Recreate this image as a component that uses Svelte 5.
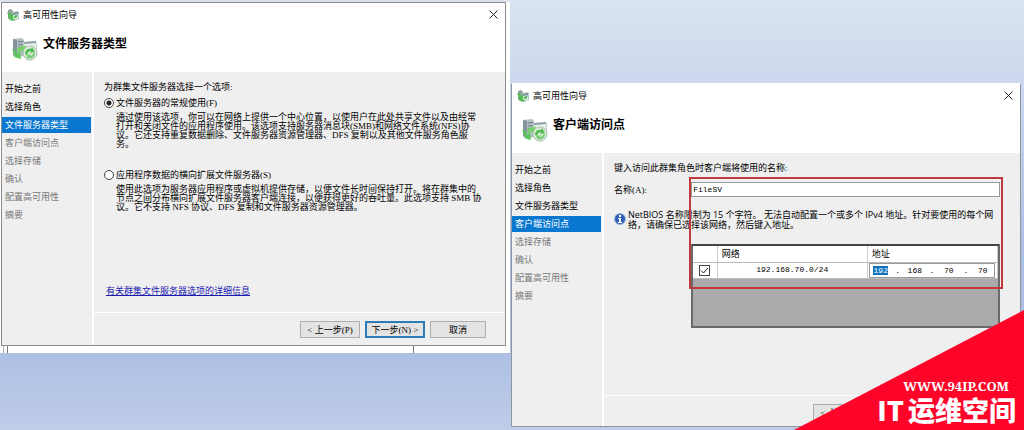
<script>
    const steps = [
        "开始之前",
        "选择角色",
        "文件服务器类型",
        "客户端访问点",
        "选择存储",
        "确认",
        "配置高可用性",
        "摘要"
    ];

    const fileServerTypes = [
        {
            id: "general",
            label: "文件服务器的常规使用(F)",
            lines: [
                "通过使用该选项，你可以在网络上提供一个中心位置，以使用户在此处共享文件以及由经常",
                "打开和关闭文件的应用程序使用。该选项支持服务器消息块(SMB)和网络文件系统(NFS)协",
                "议。它还支持重复数据删除、文件服务器资源管理器、DFS 复制以及其他文件服务角色服",
                "务。"
            ]
        },
        {
            id: "scaleout",
            label: "应用程序数据的横向扩展文件服务器(S)",
            lines: [
                "使用此选项为服务器应用程序或虚拟机提供存储，以便文件长时间保持打开。将在群集中的",
                "节点之间分布横向扩展文件服务器客户端连接，以便获得更好的吞吐量。此选项支持 SMB 协",
                "议。它不支持 NFS 协议、DFS 复制和文件服务器资源管理器。"
            ]
        }
    ];

    let serverType = $state("general");
    let clientName = $state("FileSV");
    let useNetwork = $state(true);
    let address = $state(["192", "168", "70", "70"]);
</script>

{#snippet smallIcon()}
    <svg class="icon-small" viewBox="0 0 12 12" aria-hidden="true">
        <path d="M1 1l3-1 2 2v8l-3 1-2-2z" fill="#8fa39a" />
        <path d="M5 3l6-1 1 1v7l-5 2-2-1z" fill="#b5c6c4" />
        <path d="M6 4l5-1v2l-5 1z" fill="#7d929c" />
        <path d="M0 3l3 1 1 2 2-2v4l3 2-4 2-4-3 1-1z" fill="#54bd55" />
        <circle cx="8.5" cy="8" r="2.5" fill="#d9edd8" />
        <path d="M7 9c0-2 1-3 3-3v2L8 9z" fill="#3fae47" />
    </svg>
{/snippet}

{#snippet largeIcon()}
    <svg class="icon-large" viewBox="0 0 26 24" aria-hidden="true">
        <path d="M1 2l9-1 2 2v16l-8 1-3-2z" fill="#b4bec2" />
        <path d="M1 2l4 1v17l-4-2z" fill="#84949a" />
        <path d="M6 5l5-.5M6 8l5-.5M6 11l5-.5" stroke="#6d7b82" />
        <path d="M11 5l13-1 1 2v13l-13 1z" fill="#c3cfd3" />
        <path d="M12 7l12-1v11l-12 1z" fill="#e4f1e6" />
        <path d="M12 5l12-1v2l-12 1z" fill="#93a3aa" />
        <path d="M0 12l3 1 2 4 3-3 1 8-7-2 1-1z" fill="#5cc85a" />
        <path d="M4 13l6-5 1 2 3-2-1 6-4 1 1-2-4 2z" fill="#74d069" />
        <circle cx="18" cy="16" r="7" fill="#dcebd9" stroke="#a9bfac" />
        <path d="M13 17c0-4 3-6 6-5l1-2 3 5-5 1 1-2c-2 0-3 1-4 4z" fill="#4dbb50" />
        <path d="M23 16c0 4-3 6-6 5l-1 1-2-4 5-1-1 2c2 0 3-1 3-3z" fill="#79cc75" />
    </svg>
{/snippet}

{#snippet chrome(heading)}
    <div class="titlebar">
        {@render smallIcon()}
        <span>高可用性向导</span>
        <button class="close" aria-label="关闭">
            <svg viewBox="0 0 9 9"><path d="M.5.5l8 8M8.5.5l-8 8" stroke="#222" fill="none" /></svg>
        </button>
    </div>
    <header>
        {@render largeIcon()}
        <h1>{heading}</h1>
    </header>
{/snippet}

{#snippet sidebar(current)}
    <nav>
        <ol>
            {#each steps as step, i}
                <li class:current={i === current} class:pending={i > current}>{step}</li>
            {/each}
        </ol>
    </nav>
{/snippet}

{#snippet buttons()}
    <footer>
        <button class="btn">&lt; 上一步(P)</button>
        <button class="btn primary">下一步(N) &gt;</button>
        <button class="btn cancel">取消</button>
    </footer>
{/snippet}

<main class="desktop">
    <div class="backdrop">
        <section class="window">
            {@render chrome("文件服务器类型")}
            <div class="body">
                {@render sidebar(2)}
                <div class="pane">
                    <div class="content">
                        <p>为群集文件服务器选择一个选项:</p>
                        {#each fileServerTypes as type}
                            <div class="option">
                                <input type="radio" id={type.id} name="type" value={type.id} bind:group={serverType} />
                                <label for={type.id}>{type.label}</label>
                                <p class="desc">
                                    {#each type.lines as line}
                                        {line}<br />
                                    {/each}
                                </p>
                            </div>
                        {/each}
                        <a href="#details">有关群集文件服务器选项的详细信息</a>
                    </div>
                    {@render buttons()}
                </div>
            </div>
        </section>
        <div class="behind"><i></i><i></i></div>
    </div>

    <section class="window second">
        {@render chrome("客户端访问点")}
        <div class="body">
            {@render sidebar(3)}
            <div class="pane">
                <div class="content">
                    <p>键入访问此群集角色时客户端将使用的名称:</p>
                    <div class="field">
                        <label for="client-name">名称(A):</label>
                        <input id="client-name" type="text" bind:value={clientName} />
                    </div>
                    <div class="info">
                        <svg viewBox="0 0 12 12" aria-hidden="true">
                            <circle cx="6" cy="6" r="5.5" fill="#2f62b5" stroke="#9cb4da" />
                            <path d="M5 2h2v2H5zM4 5h3v4h1v1H4V9h1V6H4z" fill="#fff" />
                        </svg>
                        <p>
                            NetBIOS 名称限制为 15 个字符。 无法自动配置一个或多个 IPv4 地址。针对要使用的每个网<br />
                            络，请确保已选择该网络，然后键入地址。
                        </p>
                    </div>
                    <div class="grid">
                        <table>
                            <thead>
                                <tr><th class="tick"></th><th class="network">网络</th><th>地址</th></tr>
                            </thead>
                            <tbody>
                                <tr>
                                    <td class="tick">
                                        <input type="checkbox" aria-label="网络" bind:checked={useNetwork} />
                                        {#if useNetwork}
                                            <svg viewBox="0 0 11 11"><path d="M2 5.5l2.5 2.5L9 3" stroke="#222" fill="none" /></svg>
                                        {/if}
                                    </td>
                                    <td class="network mono">192.168.70.0/24</td>
                                    <td class="ip">
                                        <div class="octets mono">
                                            {#each address as octet, i}
                                                {#if i > 0}<span>.</span>{/if}
                                                <input type="text" class:selected={i === 0} aria-label="地址" bind:value={address[i]} />
                                            {/each}
                                        </div>
                                    </td>
                                </tr>
                            </tbody>
                        </table>
                    </div>
                    <div class="highlight"></div>
                </div>
                {@render buttons()}
            </div>
        </div>
    </section>

    <div class="corner">
        <span class="site">WWW.94IP.COM</span>
        <span class="brand"><b>IT</b><b>运维空间</b></span>
    </div>
</main>

<style>
    :global(body) {
        margin: 0;
    }

    .desktop {
        position: relative;
        display: grid;
        grid-template-columns: 510fr 514fr;
        align-items: start;
        min-height: 100vh;
        overflow: hidden;
        background: linear-gradient(#dae3f0, #ccd8ee 19%, #a9bee3 60%, #adc0e4 82%, #c0cce8);
        font: 9px/12px "Liberation Serif", "Noto Sans CJK SC", serif;
        color: #000;
    }

    .desktop * {
        box-sizing: border-box;
    }

    p, h1, ol {
        margin: 0;
        padding: 0;
    }

    button, input {
        font: inherit;
        color: inherit;
    }

    .mono, #client-name {
        font-family: "Liberation Mono", monospace;
        font-size: 8px;
    }

    /* windows */
    .backdrop {
        padding: 2px 4px 0 1px;
        background: linear-gradient(90deg, #dbe2ec, #dbe2ec) top / 100% 2px no-repeat #fff;
    }

    .window {
        border: 1px solid #8c8c8c;
        background: #fff;
    }

    .second {
        margin: 83px 3px 0 1px;
        border-color: #8f959c;
        border-top-color: #fff;
    }

    .behind {
        display: flex;
        justify-content: space-between;
        height: 7px;
        padding: 0 92px 0 2px;
    }

    .behind i {
        width: 5px;
        border-left: 1px solid #aaa;
        border-right: 1px solid #777;
    }

    .behind i:last-child {
        border-left: 0;
    }

    .titlebar {
        display: flex;
        align-items: center;
        gap: 4px;
        height: 23px;
        padding: 0 7px 0 5px;
        font-family: "Noto Sans CJK SC", sans-serif;
    }

    .icon-small {
        width: 12px;
        height: 12px;
    }

    .close {
        display: flex;
        margin-left: auto;
        padding: 0;
        border: 0;
        background: none;
    }

    .close svg {
        width: 9px;
        height: 9px;
    }

    header {
        display: flex;
        align-items: flex-start;
        gap: 5px;
        height: 46px;
        padding: 8px 10px 0;
    }

    .icon-large {
        width: 26px;
        height: 24px;
        margin-top: 3px;
    }

    h1 {
        font: bold 12px/18px "Noto Sans CJK SC", sans-serif;
    }

    .body {
        display: flex;
        height: 273px;
        background: #efefef;
    }

    nav {
        width: 92px;
        padding: 9px 1px 0 0;
        border-right: 2px solid #fff;
    }

    ol {
        display: flex;
        flex-direction: column;
        gap: 2px;
        list-style: none;
    }

    li {
        height: 16px;
        padding-left: 3px;
        line-height: 16px;
    }

    .current {
        background: #0a78d0;
        color: #fff;
    }

    .pending {
        color: #777;
    }

    .pane {
        flex: 1;
        display: flex;
        flex-direction: column;
        min-width: 0;
    }

    .content {
        position: relative;
        flex: 1;
        padding: 9px 20px 0 10px;
        white-space: nowrap;
    }

    /* file server types */
    .option {
        display: grid;
        grid-template-columns: 12px 1fr;
        align-content: start;
        align-items: center;
        min-height: 72px;
        padding-top: 4px;
    }

    .option label {
        height: 12px;
    }

    .desc {
        grid-column: 2;
        padding-top: 4px;
        line-height: 9px;
    }

    [type="radio"] {
        appearance: none;
        width: 10px;
        height: 10px;
        margin: 0;
        border: 1px solid #444;
        border-radius: 50%;
        background: #fff;
    }

    [type="radio"]:checked {
        background: radial-gradient(#222 0 2px, #fff 3px);
    }

    a {
        display: inline-block;
        margin: 48px 0 0 2px;
        color: #1a1ab0;
    }

    footer {
        display: flex;
        justify-content: flex-end;
        gap: 5px;
        height: 33px;
        padding: 8px 19px 0;
        border-top: 1px solid #fff;
    }

    .btn {
        width: 60px;
        height: 17px;
        padding: 0;
        border: 1px solid #adadad;
        background: #e3e3e3;
        line-height: 14px;
        white-space: nowrap;
    }

    .primary {
        border: 2px solid #2b7cb8;
    }

    .cancel {
        width: 56px;
    }

    .second footer {
        height: 31px;
        padding-right: 21px;
    }

    /* these two lie under the corner mark */
    .second .primary, .second .cancel {
        visibility: hidden;
    }

    /* client access point */
    .field {
        display: flex;
        align-items: center;
        justify-content: space-between;
        margin-top: 8px;
    }

    #client-name {
        width: 80%;
        height: 15px;
        padding: 0 1px;
        border: 1px solid #999;
        background: #fff;
    }

    .info {
        display: flex;
        gap: 2px;
        margin-top: 13px;
        font-family: "Open Sans", "Noto Sans CJK SC", sans-serif;
        line-height: 10px;
    }

    .info svg {
        flex: none;
        width: 12px;
        height: 12px;
        margin-top: 3px;
    }

    .grid {
        width: 80%;
        height: 84px;
        margin: 14px 0 0 auto;
        border: 2px solid #6a6a6a;
        border-top-color: #444;
        background: #aaa;
    }

    table {
        width: 100%;
        border-collapse: collapse;
        table-layout: fixed;
        background: #fff;
    }

    th, td {
        height: 16px;
        padding: 0 4px;
        border-right: 1px solid #ccc;
        border-bottom: 1px solid #bbb;
        font-weight: normal;
        text-align: left;
    }

    .tick {
        position: relative;
        width: 24px;
    }

    .tick svg {
        position: absolute;
        inset: 2px 6px;
        width: 11px;
        height: 11px;
        pointer-events: none;
    }

    [type="checkbox"] {
        appearance: none;
        display: block;
        width: 11px;
        height: 11px;
        margin: 0 2px;
        border: 1px solid #444;
        background: #fff;
    }

    .network {
        width: 150px;
    }

    td.network {
        text-align: center;
    }

    td.ip {
        padding: 0 2px 0 1px;
    }

    .octets {
        display: flex;
        align-items: center;
        justify-content: space-around;
        height: 15px;
        border: 1px solid #999;
        line-height: 9px;
    }

    .octets input {
        width: 15px;
        height: 9px;
        padding: 0;
        border: 0;
        background: none;
        text-align: center;
    }

    .octets .selected {
        background: #1173bd;
        color: #fff;
    }

    .highlight {
        position: absolute;
        inset: 24px 17px auto 85px;
        height: 112px;
        border: 2px solid #c03a3c;
        pointer-events: none;
    }

    /* site mark */
    .corner {
        position: absolute;
        right: 0;
        bottom: 0;
        display: flex;
        flex-direction: column;
        align-items: flex-end;
        justify-content: flex-end;
        width: 230px;
        height: 120px;
        padding: 0 8px 4px;
        background: #fe0429;
        clip-path: polygon(100% 0, 100% 100%, 0 100%);
        color: #fff;
    }

    .site {
        padding-right: 7px;
        font: bold 13px/16px "Noto Serif", "Liberation Serif", serif;
    }

    .brand {
        display: flex;
        gap: 4px;
        font: bold 27px/32px "Noto Sans CJK SC", sans-serif;
    }
</style>
